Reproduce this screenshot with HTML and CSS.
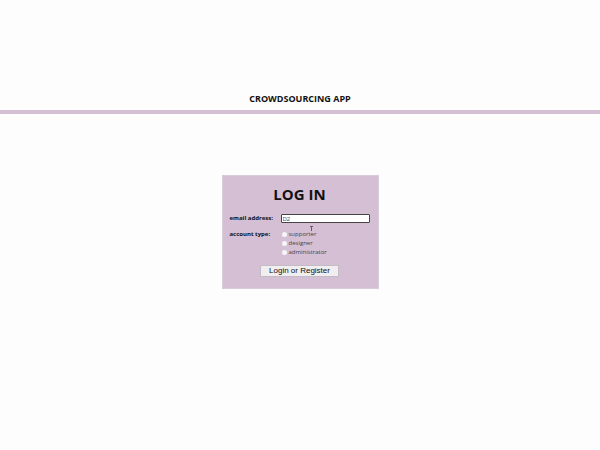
FILE: index.html
```html
<!DOCTYPE html>
<html lang="en">
<head>
<meta charset="utf-8">
<title>Crowdsourcing App</title>
<link rel="stylesheet" href="styles.css">
</head>
<body>
<header class="site-header"><p class="brand">CROWDSOURCING APP</p></header>
<main class="page">
<form class="login">
<h1 class="title">LOG IN</h1>
<div class="row email-row">
<label class="name" for="email">email address:</label>
<div class="field">
<input class="email" id="email" type="text" value="D2">
<svg class="cursor" viewBox="0 0 5 7" aria-hidden="true"><path d="M1 1.5H4M2.5 1V6" fill="none" stroke="#655b68" stroke-width="1"/></svg>
</div>
</div>
<div class="row" role="radiogroup" aria-labelledby="type-label">
<span class="name" id="type-label">account type:</span>
<div class="options">
<label class="option"><input class="radio" type="radio" name="type">supporter</label>
<label class="option"><input class="radio" type="radio" name="type">designer</label>
<label class="option"><input class="radio" type="radio" name="type">administrator</label>
</div>
</div>
<button class="submit" type="button">Login or Register</button>
</form>
</main>
</body>
</html>
```
FILE: styles.css
```css
* { box-sizing: border-box; }
body {
  margin: 0;
  background: #fefdfe;
  color: #111;
  font-family: "Open Sans", "Noto Sans", sans-serif;
  font-size: 6px;
}
.site-header {
  padding-top: 93px;
  border-bottom: 4px solid #d4bfd5;
}
.brand {
  margin: 0;
  padding-bottom: 5px;
  text-align: center;
  font-size: 9px;
  font-weight: 700;
  line-height: 12px;
}
.page {
  display: flex;
  justify-content: center;
  padding-top: 61px;
}
.login {
  display: flex;
  flex-direction: column;
  width: 157px;
  padding: 8px 8px 11px 7px;
  border: 1px solid #d9ccda;
  background: #d4bfd5;
}
.title {
  margin: 0 0 10px;
  text-align: center;
  font-size: 15px;
  line-height: 20px;
}
.row {
  display: grid;
  grid-template-columns: 51px 1fr;
  line-height: 9px;
}
.email-row { margin-bottom: 7px; }
.name { font-weight: 700; }
.field { position: relative; }
.email {
  display: block;
  width: 100%;
  height: 9px;
  padding: 0 1px;
  border: 1px solid #444;
  border-radius: 1px;
  outline: none;
  background: #fff;
  color: #555;
  font: 6px/7px "Liberation Sans", sans-serif;
}
.cursor {
  position: absolute;
  top: 11px;
  left: 28px;
  width: 5px;
  height: 7px;
}
.options {
  padding-left: 1px;
  color: #444;
}
.option {
  display: flex;
  align-items: center;
  gap: 2px;
}
.radio {
  appearance: none;
  width: 5px;
  height: 5px;
  margin: 0;
  border-radius: 50%;
  background: #f8f4f8;
}
.submit {
  align-self: center;
  margin-top: 8px;
  padding: 0 8px;
  height: 12px;
  border: 1px solid #c4bcc5;
  border-radius: 1px;
  background: #f0eef0;
  color: #111;
  font: 8px/10px "Liberation Sans", sans-serif;
}
```
